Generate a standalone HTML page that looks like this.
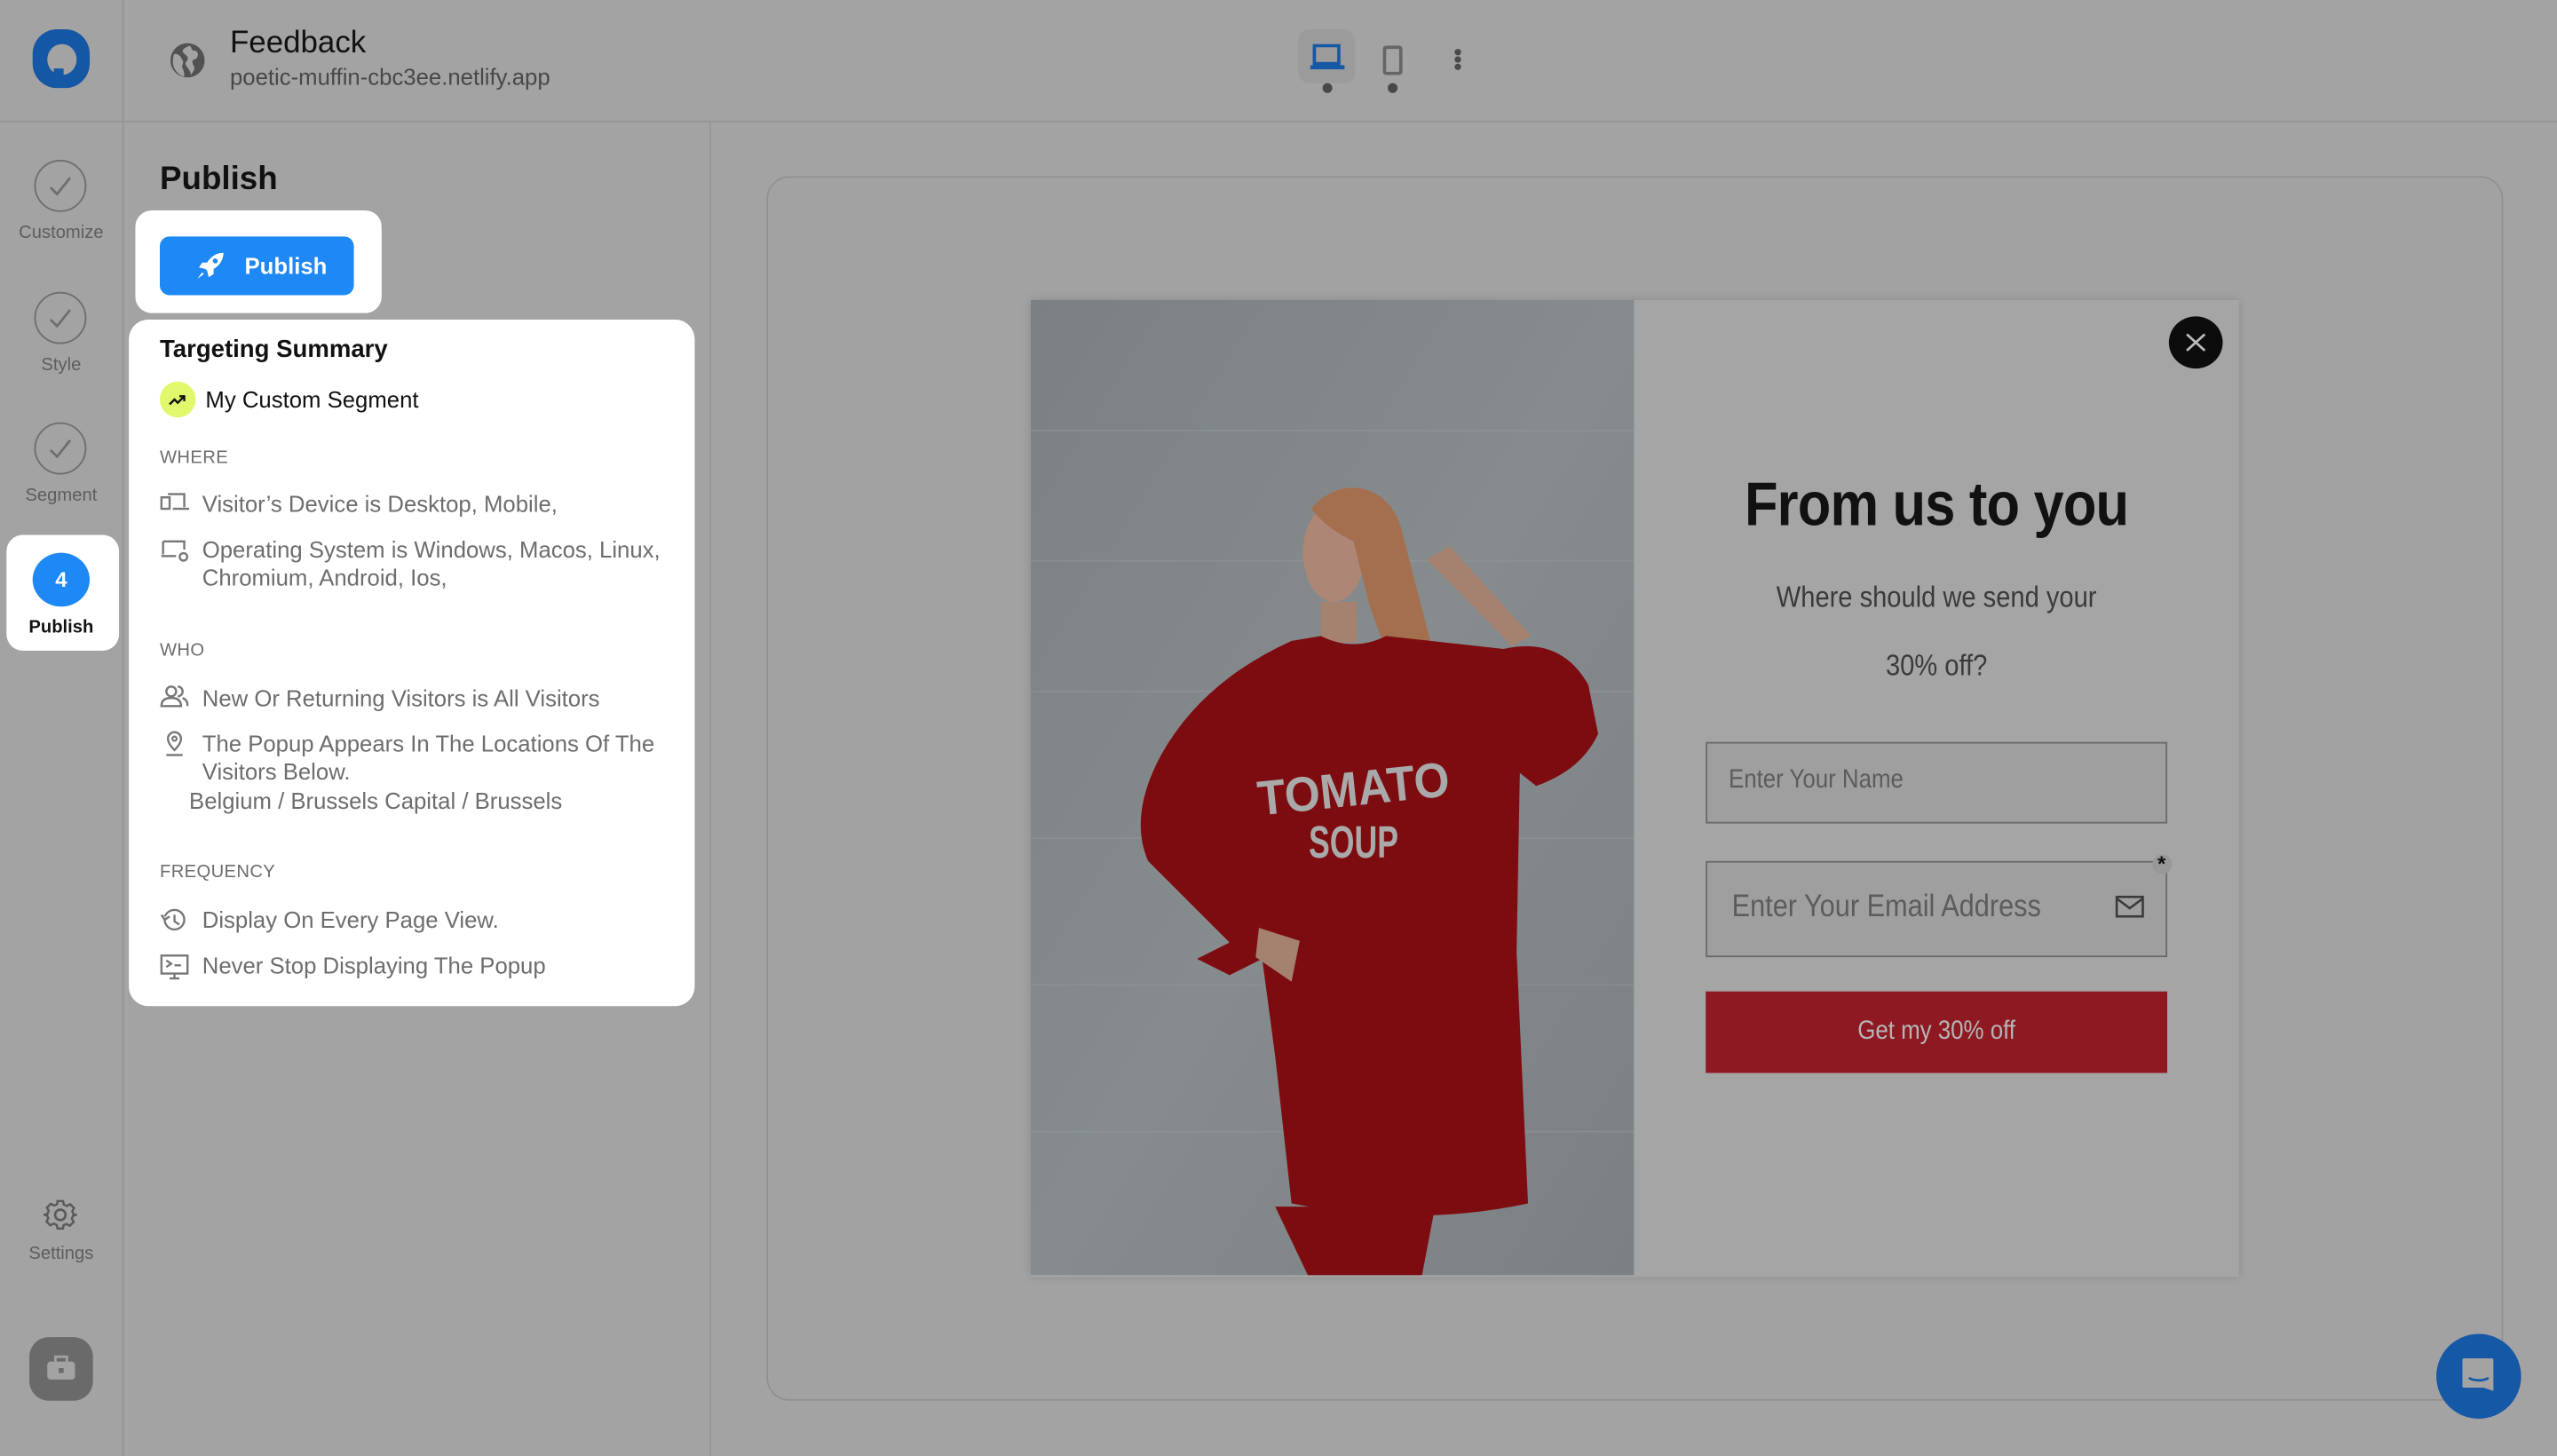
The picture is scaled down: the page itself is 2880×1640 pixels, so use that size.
<!DOCTYPE html>
<html><head><meta charset="utf-8"><style>
*{box-sizing:border-box;margin:0;padding:0}
html,body{width:2880px;height:1640px;overflow:hidden;background:#a3a3a3}
#s{position:absolute;left:0;top:0;width:1568px;height:893px;transform:scale(1.836735);transform-origin:0 0;font-family:"Liberation Sans",sans-serif;background:#a3a3a3}
.a{position:absolute}
.t{white-space:nowrap}
.row{position:absolute;left:98px;font-size:14px;color:#6d6d6d;line-height:17px}
.row svg{position:absolute;left:0;top:0}
.row span{position:absolute;left:26px;white-space:nowrap}
.hd{position:absolute;left:98px;font-size:11px;color:#6d6d6d;letter-spacing:.2px}
.step{position:absolute;left:21px;width:32px;height:32px;border:1.5px solid #6e6e6e;border-radius:50%}
.lbl{position:absolute;left:0;width:75px;text-align:center;font-size:11px;color:#5e5e5e}
.nc{transform:scaleX(.88);transform-origin:50% 50%}
.nl{transform:scaleX(.88);transform-origin:0 50%}
</style></head><body><div id="s">
<div class="a" style="left:75px;top:0;width:1px;height:893px;background:#949494"></div>
<div class="a" style="left:0;top:74px;width:1568px;height:1px;background:#949494"></div>
<div class="a" style="left:435px;top:75px;width:1px;height:818px;background:#959595"></div>
<div class="a" style="left:20px;top:18px;width:35px;height:36px;border-radius:15px;background:#1457a4"></div>
<div class="a" style="left:29px;top:27px;width:18px;height:19px;border-radius:50%;background:#a3a3a3"></div>
<div class="a" style="left:33px;top:42px;width:6px;height:8px;background:#1457a4;border-radius:0 0 0 6px"></div>
<svg class="a" style="left:103px;top:25px" width="24" height="24" viewBox="0 0 24 24"><circle cx="12" cy="12" r="10.5" fill="#525252"/><path d="M4 8c3 0 4 2 5 4s-1 3 0 5 1 3 1 5c-4-1-7-5-7-9 0-2 0-3 1-5zM13 3c2 1 1 3 3 3s3 2 2 4-3 1-3 3 2 3 1 5l-2 3c0-3-2-4-3-6s2-3 1-5-3-2-3-4c1-2 3-2 4-3z" fill="#a3a3a3"/></svg>
<div class="a t" style="left:141px;top:16px;font-size:19px;color:#111">Feedback</div>
<div class="a t" style="left:141px;top:39px;font-size:14px;color:#484848">poetic-muffin-cbc3ee.netlify.app</div>
<div class="a" style="left:796px;top:18px;width:35px;height:33px;border-radius:7px;background:#9b9b9b"></div>
<svg class="a" style="left:803px;top:27px" width="22" height="16" viewBox="0 0 22 16"><rect x="3" y="1" width="15" height="11" fill="none" stroke="#1558a6" stroke-width="2"/><rect x="0.5" y="13" width="21" height="2.5" fill="#1558a6"/></svg>
<div class="a" style="left:811px;top:51px;width:6px;height:6px;border-radius:50%;background:#484848"></div>
<div class="a" style="left:848px;top:28px;width:12px;height:18px;border:2.5px solid #666;border-radius:2px"></div>
<div class="a" style="left:851px;top:51px;width:6px;height:6px;border-radius:50%;background:#484848"></div>
<div class="a" style="left:892px;top:30px;width:4px;height:4px;border-radius:50%;background:#4a4a4a;box-shadow:0 4.5px 0 #4a4a4a,0 9px 0 #4a4a4a"></div>
<div class="step" style="top:98px"></div><svg class="a" style="left:29px;top:107px" width="16" height="14"><path d="M2 8l4 4 8-10" fill="none" stroke="#6e6e6e" stroke-width="1.5"/></svg>
<div class="lbl" style="top:137px">Customize</div>
<div class="step" style="top:179px"></div><svg class="a" style="left:29px;top:188px" width="16" height="14"><path d="M2 8l4 4 8-10" fill="none" stroke="#6e6e6e" stroke-width="1.5"/></svg>
<div class="lbl" style="top:218px">Style</div>
<div class="step" style="top:259px"></div><svg class="a" style="left:29px;top:268px" width="16" height="14"><path d="M2 8l4 4 8-10" fill="none" stroke="#6e6e6e" stroke-width="1.5"/></svg>
<div class="lbl" style="top:298px">Segment</div>
<div class="a" style="left:4px;top:328px;width:69px;height:71px;border-radius:10px;background:#fff"></div>
<div class="a" style="left:20px;top:339px;width:35px;height:33px;border-radius:50%;background:#1e88f5;color:#fff;font-size:13px;font-weight:bold;text-align:center;line-height:33px">4</div>
<div class="lbl" style="top:379px;color:#111;font-weight:bold">Publish</div>
<svg class="a" style="left:26px;top:734px" width="22" height="22" viewBox="0 0 24 24"><path d="M10 2h4l.6 2.6 2.2 1 2.4-1.3 2.8 2.8-1.3 2.4 1 2.2L24 12v0l-2.6.6-1 2.2 1.3 2.4-2.8 2.8-2.4-1.3-2.2 1L14 22h-4l-.6-2.6-2.2-1-2.4 1.3-2.8-2.8 1.3-2.4-1-2.2L0 12l2.6-.6 1-2.2-1.3-2.4 2.8-2.8 2.4 1.3 2.2-1z" fill="none" stroke="#5a5a5a" stroke-width="1.6" transform="scale(.92) translate(1 1)"/><circle cx="12" cy="12" r="3.5" fill="none" stroke="#5a5a5a" stroke-width="1.6"/></svg>
<div class="lbl" style="top:763px">Settings</div>
<div class="a" style="left:18px;top:820px;width:39px;height:39px;border-radius:12px;background:#6a6a6a"></div>
<svg class="a" style="left:28px;top:831px" width="19" height="16" viewBox="0 0 19 16"><rect x="6" y="1" width="7" height="4" fill="none" stroke="#a3a3a3" stroke-width="1.5"/><rect x="1" y="4" width="17" height="11" rx="2" fill="#a3a3a3"/><rect x="8" y="8" width="3" height="3" fill="#6a6a6a"/></svg>
<div class="a t" style="left:98px;top:99px;font-size:20px;font-weight:bold;color:#111">Publish</div>
<div class="a" style="left:83px;top:129px;width:151px;height:63px;border-radius:10px;background:#fff"></div>
<div class="a" style="left:98px;top:145px;width:119px;height:36px;border-radius:6px;background:#1e88f5"></div>
<svg class="a" style="left:120px;top:154px" width="18" height="18" viewBox="0 0 18 18"><path d="M17 1c-5 0-8 3-10 6L4 7 2 10l4 1 1 1 1 4 3-2V11c3-2 6-5 6-10z" fill="#fff"/><circle cx="12" cy="6" r="1.5" fill="#1e88f5"/><path d="M4 13l-3 4 4-3z" fill="#fff"/></svg>
<div class="a t" style="left:150px;top:155px;font-size:14px;font-weight:bold;color:#fff">Publish</div>
<div class="a" style="left:79px;top:196px;width:347px;height:421px;border-radius:12px;background:#fff"></div>
<div class="a t" style="left:98px;top:206px;font-size:15px;font-weight:bold;color:#111">Targeting Summary</div>
<div class="a" style="left:98px;top:234px;width:22px;height:22px;border-radius:50%;background:#e2f86c"></div>
<svg class="a" style="left:103px;top:240px" width="12" height="10"><path d="M1 8l3-3 2 2 4-4M7 3h3v3" fill="none" stroke="#111" stroke-width="1.3"/></svg>
<div class="a t" style="left:126px;top:237px;font-size:14px;color:#111">My Custom Segment</div>
<div class="hd" style="top:275px">WHERE</div>
<div class="row" style="top:301px"><svg width="18" height="14"><rect x="1" y="4" width="5" height="7" fill="none" stroke="#777" stroke-width="1.3"/><path d="M5 2h10v8M8 11h10" fill="none" stroke="#777" stroke-width="1.3"/></svg><span>Visitor’s Device is Desktop, Mobile,</span></div>
<div class="row" style="top:329px"><svg width="18" height="18"><path d="M2 3h13v5M1 12h9" fill="none" stroke="#777" stroke-width="1.3"/><path d="M2 3v8" stroke="#777" stroke-width="1.3"/><circle cx="14.5" cy="12.5" r="2.3" fill="none" stroke="#777" stroke-width="1.3"/></svg><span>Operating System is Windows, Macos, Linux,<br>Chromium, Android, Ios,</span></div>
<div class="hd" style="top:393px">WHO</div>
<div class="row" style="top:420px"><svg width="18" height="14"><circle cx="7" cy="4" r="3" fill="none" stroke="#777" stroke-width="1.3"/><path d="M1 13c0-4 3-5 6-5s6 1 6 5zM11 1a3 3 0 010 6M14 8c2 1 3 2 3 5" fill="none" stroke="#777" stroke-width="1.3"/></svg><span>New Or Returning Visitors is All Visitors</span></div>
<div class="row" style="top:448px"><svg width="18" height="18"><path d="M9 12c-3-3-4-5-4-7a4 4 0 018 0c0 2-1 4-4 7zM4 15h10" fill="none" stroke="#777" stroke-width="1.3"/><circle cx="9" cy="5" r="1.3" fill="none" stroke="#777" stroke-width="1.2"/></svg><span>The Popup Appears In The Locations Of The<br>Visitors Below.</span></div>
<div class="row" style="top:483px;left:116px">Belgium / Brussels Capital / Brussels</div>
<div class="hd" style="top:529px">FREQUENCY</div>
<div class="row" style="top:556px"><svg width="18" height="16"><path d="M3 8a6 6 0 106-6c-3 0-5 2-6 4M1 5l2 3 3-2M9 5v4l3 2" fill="none" stroke="#777" stroke-width="1.3"/></svg><span>Display On Every Page View.</span></div>
<div class="row" style="top:584px"><svg width="18" height="18"><path d="M1 2h16v11H1zM6 16h6M9 13v3M4 5l3 2-3 2M9 8h4" fill="none" stroke="#777" stroke-width="1.3"/></svg><span>Never Stop Displaying The Popup</span></div>
<div class="a" style="left:470px;top:108px;width:1065px;height:751px;border:1px solid #919191;border-radius:14px;background:#a2a2a2"></div>
<div class="a" style="left:632px;top:184px;width:741px;height:599px;background:#a5a5a5;box-shadow:0 0 6px rgba(0,0,0,.15)"></div>
<svg class="a" style="left:632px;top:184px" width="370" height="598" viewBox="0 0 370 598">
<defs><linearGradient id="w" x1="0" y1="0" x2="1" y2="1"><stop offset="0" stop-color="#7b8183"/><stop offset=".5" stop-color="#868c8e"/><stop offset="1" stop-color="#7a8083"/></linearGradient></defs>
<rect width="370" height="598" fill="url(#w)"/>
<g stroke="#8f9597" stroke-width="1" opacity=".6"><path d="M0 80H370M0 160H370M0 240H370M0 330H370M0 420H370M0 510H370"/></g>
<path d="M178 185h22v25h-22z" fill="#a58170"/>
<ellipse cx="186" cy="155" rx="19" ry="30" fill="#ad8676"/>
<path d="M172 128c18-22 50-15 56 15l22 85-22 15-20-55-10-40c-10-5-18-10-26-20z" fill="#a46f4f"/>
<path d="M178 206q20 10 40 0l72 8q35-8 52 22l6 30q-10 22-38 32l-10-8-2 110 7 154q-70 15-145 0l-10-90-8-60-20 10-20-10 20-10q-25-25-50-50-12-28 8-65 25-45 80-70z" fill="#7d0c11"/>
<path d="M295 212l12-6-50-55-14 8z" fill="#a58170"/>
<path d="M140 385l25 8-5 25-22-15z" fill="#a58170"/>
<path d="M150 556h98l-8 42H170z" fill="#7d0c11"/>
<text x="198" y="310" font-family="Liberation Sans,sans-serif" font-size="30" font-weight="bold" fill="#a9a9a9" text-anchor="middle" textLength="118" lengthAdjust="spacingAndGlyphs" transform="rotate(-6 198 300)">TOMATO</text>
<text x="198" y="342" font-family="Liberation Sans,sans-serif" font-size="28" font-weight="bold" fill="#a9a9a9" text-anchor="middle" textLength="55" lengthAdjust="spacingAndGlyphs">SOUP</text>
</svg>
<div class="a" style="left:1330px;top:194px;width:33px;height:32px;border-radius:50%;background:#0c0c0c"></div>
<svg class="a" style="left:1340px;top:204px" width="13" height="12"><path d="M1 1l11 10M12 1L1 11" stroke="#bbb" stroke-width="1.5"/></svg>
<div class="a t nc" style="left:1002px;width:371px;top:289px;text-align:center;font-size:38px;font-weight:bold;color:#111;letter-spacing:-0.5px">From us to you</div>
<div class="a t nc" style="left:1002px;width:371px;top:356px;text-align:center;font-size:18px;color:#3a3a3a">Where should we send your</div>
<div class="a t nc" style="left:1002px;width:371px;top:398px;text-align:center;font-size:18px;color:#3a3a3a">30% off?</div>
<div class="a" style="left:1046px;top:455px;width:283px;height:50px;border:1px solid #6a6a6a;background:#9f9f9f"></div>
<div class="a t nl" style="left:1060px;top:470px;font-size:16px;color:#5c5c5c">Enter Your Name</div>
<div class="a" style="left:1046px;top:528px;width:283px;height:59px;border:1px solid #6a6a6a;background:#9f9f9f"></div>
<div class="a t nl" style="left:1062px;top:546px;font-size:19px;color:#5c5c5c">Enter Your Email Address</div>
<svg class="a" style="left:1297px;top:549px" width="18" height="15"><rect x="1" y="1" width="16" height="12" fill="none" stroke="#3a3a3a" stroke-width="1.4"/><path d="M1 2l8 6 8-6" fill="none" stroke="#3a3a3a" stroke-width="1.4"/></svg>
<div class="a" style="left:1320px;top:524px;width:12px;height:12px;border-radius:50%;background:#989898"></div>
<div class="a t" style="left:1323px;top:522px;font-size:13px;font-weight:bold;color:#111">*</div>
<div class="a" style="left:1046px;top:608px;width:283px;height:50px;background:#8f1922"></div>
<div class="a t nc" style="left:1046px;width:283px;top:624px;text-align:center;font-size:16px;color:#b5b5b5">Get my 30% off</div>
<div class="a" style="left:1494px;top:818px;width:52px;height:52px;border-radius:50%;background:#1558a6"></div>
<svg class="a" style="left:1509px;top:832px" width="22" height="22" viewBox="0 0 22 22"><path d="M2 1h17a1 1 0 011 1v19l-6-2H2a1 1 0 01-1-1V2a1 1 0 011-1z" fill="#a3a3a3"/><path d="M5 13c3 2 9 2 12 0" fill="none" stroke="#1558a6" stroke-width="1.5"/></svg>
</div></body></html>
